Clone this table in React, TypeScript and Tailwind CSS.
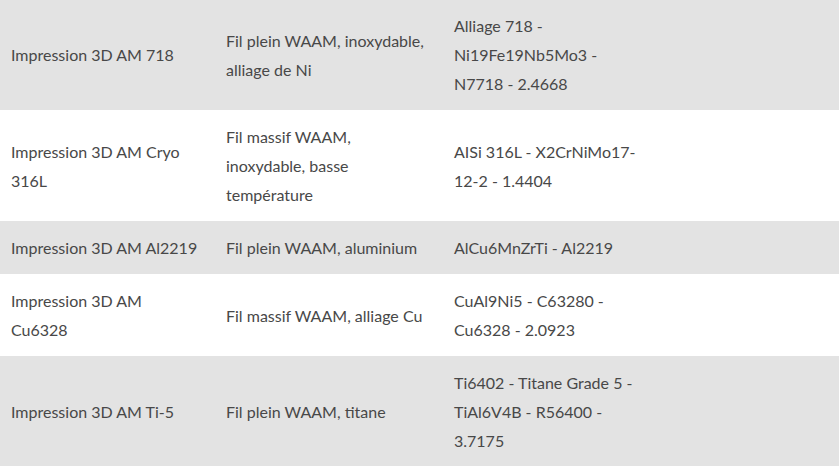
const rows: string[][][] = [
  [["Impression 3D AM 718"], ["Fil plein WAAM, inoxydable,", "alliage de Ni"], ["Alliage 718 -", "Ni19Fe19Nb5Mo3 -", "N7718 - 2.4668"]],
  [["Impression 3D AM Cryo", "316L"], ["Fil massif WAAM,", "inoxydable, basse", "température"], ["AISi 316L - X2CrNiMo17-", "12-2 - 1.4404"]],
  [["Impression 3D AM Al2219"], ["Fil plein WAAM, aluminium"], ["AlCu6MnZrTi - Al2219"]],
  [["Impression 3D AM", "Cu6328"], ["Fil massif WAAM, alliage Cu"], ["CuAl9Ni5 - C63280 -", "Cu6328 - 2.0923"]],
  [["Impression 3D AM Ti-5"], ["Fil plein WAAM, titane"], ["Ti6402 - Titane Grade 5 -", "TiAl6V4B - R56400 -", "3.7175"]],
];

function Cell({ lines }: { lines: string[] }) {
  return (
    <div className="px-[11px] whitespace-nowrap">
      {lines.map((l, i) => (
        <div key={i}>{l}</div>
      ))}
    </div>
  );
}

export default function App() {
  return (
    <div
      className="w-[839px] h-[466px] overflow-hidden bg-white text-[16px] leading-[29px] text-[#484848] font-normal"
      style={{ fontFamily: "Lato, 'Liberation Sans', sans-serif" }}
    >
      <div className="-mt-px">
        {rows.map((r, i) => (
          <div
            key={i}
            className={`grid grid-cols-[215px_228px_200px_1fr] items-center py-3 ${i % 2 === 0 ? "bg-[#e3e3e3]" : "bg-white"}`}
          >
            <Cell lines={r[0]} />
            <Cell lines={r[1]} />
            <Cell lines={r[2]} />
            <div />
          </div>
        ))}
      </div>
    </div>
  );
}
